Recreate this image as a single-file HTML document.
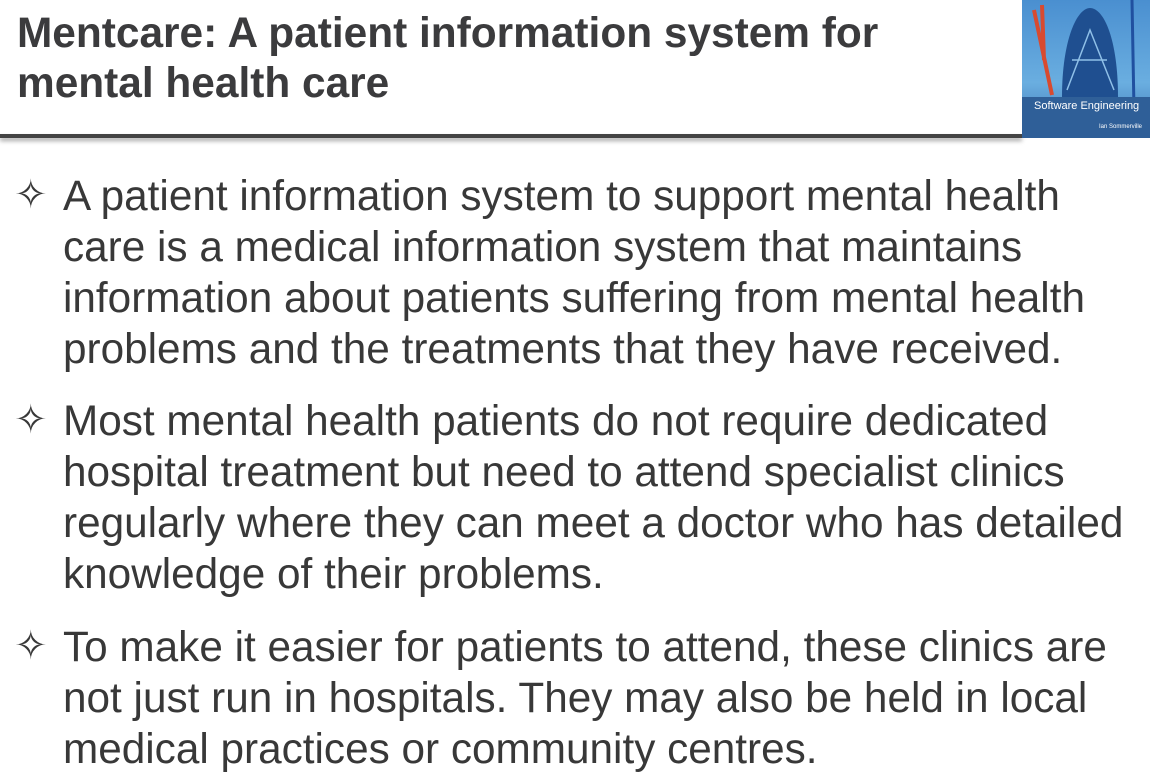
<!DOCTYPE html>
<html><head><style>
html,body{margin:0;padding:0;}
body{width:1163px;height:776px;background:#fff;position:relative;overflow:hidden;font-family:"Liberation Sans",Arial,sans-serif;}
.title{position:absolute;left:17px;top:8px;font-weight:bold;font-size:42.4px;line-height:50px;color:#3b3b3d;white-space:nowrap;}
.rule{position:absolute;left:0;top:134px;width:1022px;height:4px;background:#444;box-shadow:0 3px 4px rgba(0,0,0,0.35);}
.logo{position:absolute;left:1022px;top:0;width:128px;height:138px;background:linear-gradient(#4a8fd0,#6aaee0 60%,#3a70b0);overflow:hidden;}
.band{position:absolute;left:0;top:97px;width:128px;height:41px;background:#2f5f98;}
.l1{position:absolute;left:12px;top:100px;color:#fff;font-size:11px;}
.l2{position:absolute;right:8px;top:124px;color:#fff;font-size:6px;}
.t{position:absolute;left:63px;font-size:42.3px;color:#383838;white-space:nowrap;line-height:51px;}
.b{position:absolute;left:14px;font-size:40px;line-height:51px;color:#383838;}
</style></head><body>
<div class="title">Mentcare: A patient information system for<br>mental health care</div>
<div class="rule"></div>
<div class="logo">
<svg width="128" height="138" style="position:absolute;left:0;top:0">
<path d="M40 97 C40 40 55 8 68 8 C82 8 96 40 96 97 Z" fill="#1f4f90"/>
<path d="M45 90 L68 30 L92 90 M50 60 L85 60" stroke="#8fc0e8" stroke-width="1.5" fill="none"/>
<path d="M12 10 L30 95 M20 5 L22 60" stroke="#d84a30" stroke-width="4"/>
<path d="M110 0 L112 110" stroke="#2050a0" stroke-width="3"/>
</svg>
<div class="band"></div>
<div class="l1">Software Engineering</div>
<div class="l2">Ian Sommerville</div>
</div>
<div class="b" style="top:170px">✧</div>
<div class="t" style="top:170px">A patient information system to support mental health<br>care is a medical information system that maintains<br>information about patients suffering from mental health<br>problems and the treatments that they have received.</div>
<div class="b" style="top:395px">✧</div>
<div class="t" style="top:395px">Most mental health patients do not require dedicated<br>hospital treatment but need to attend specialist clinics<br>regularly where they can meet a doctor who has detailed<br>knowledge of their problems.</div>
<div class="b" style="top:621px">✧</div>
<div class="t" style="top:621px">To make it easier for patients to attend, these clinics are<br>not just run in hospitals. They may also be held in local<br>medical practices or community centres.</div>
</body></html>
